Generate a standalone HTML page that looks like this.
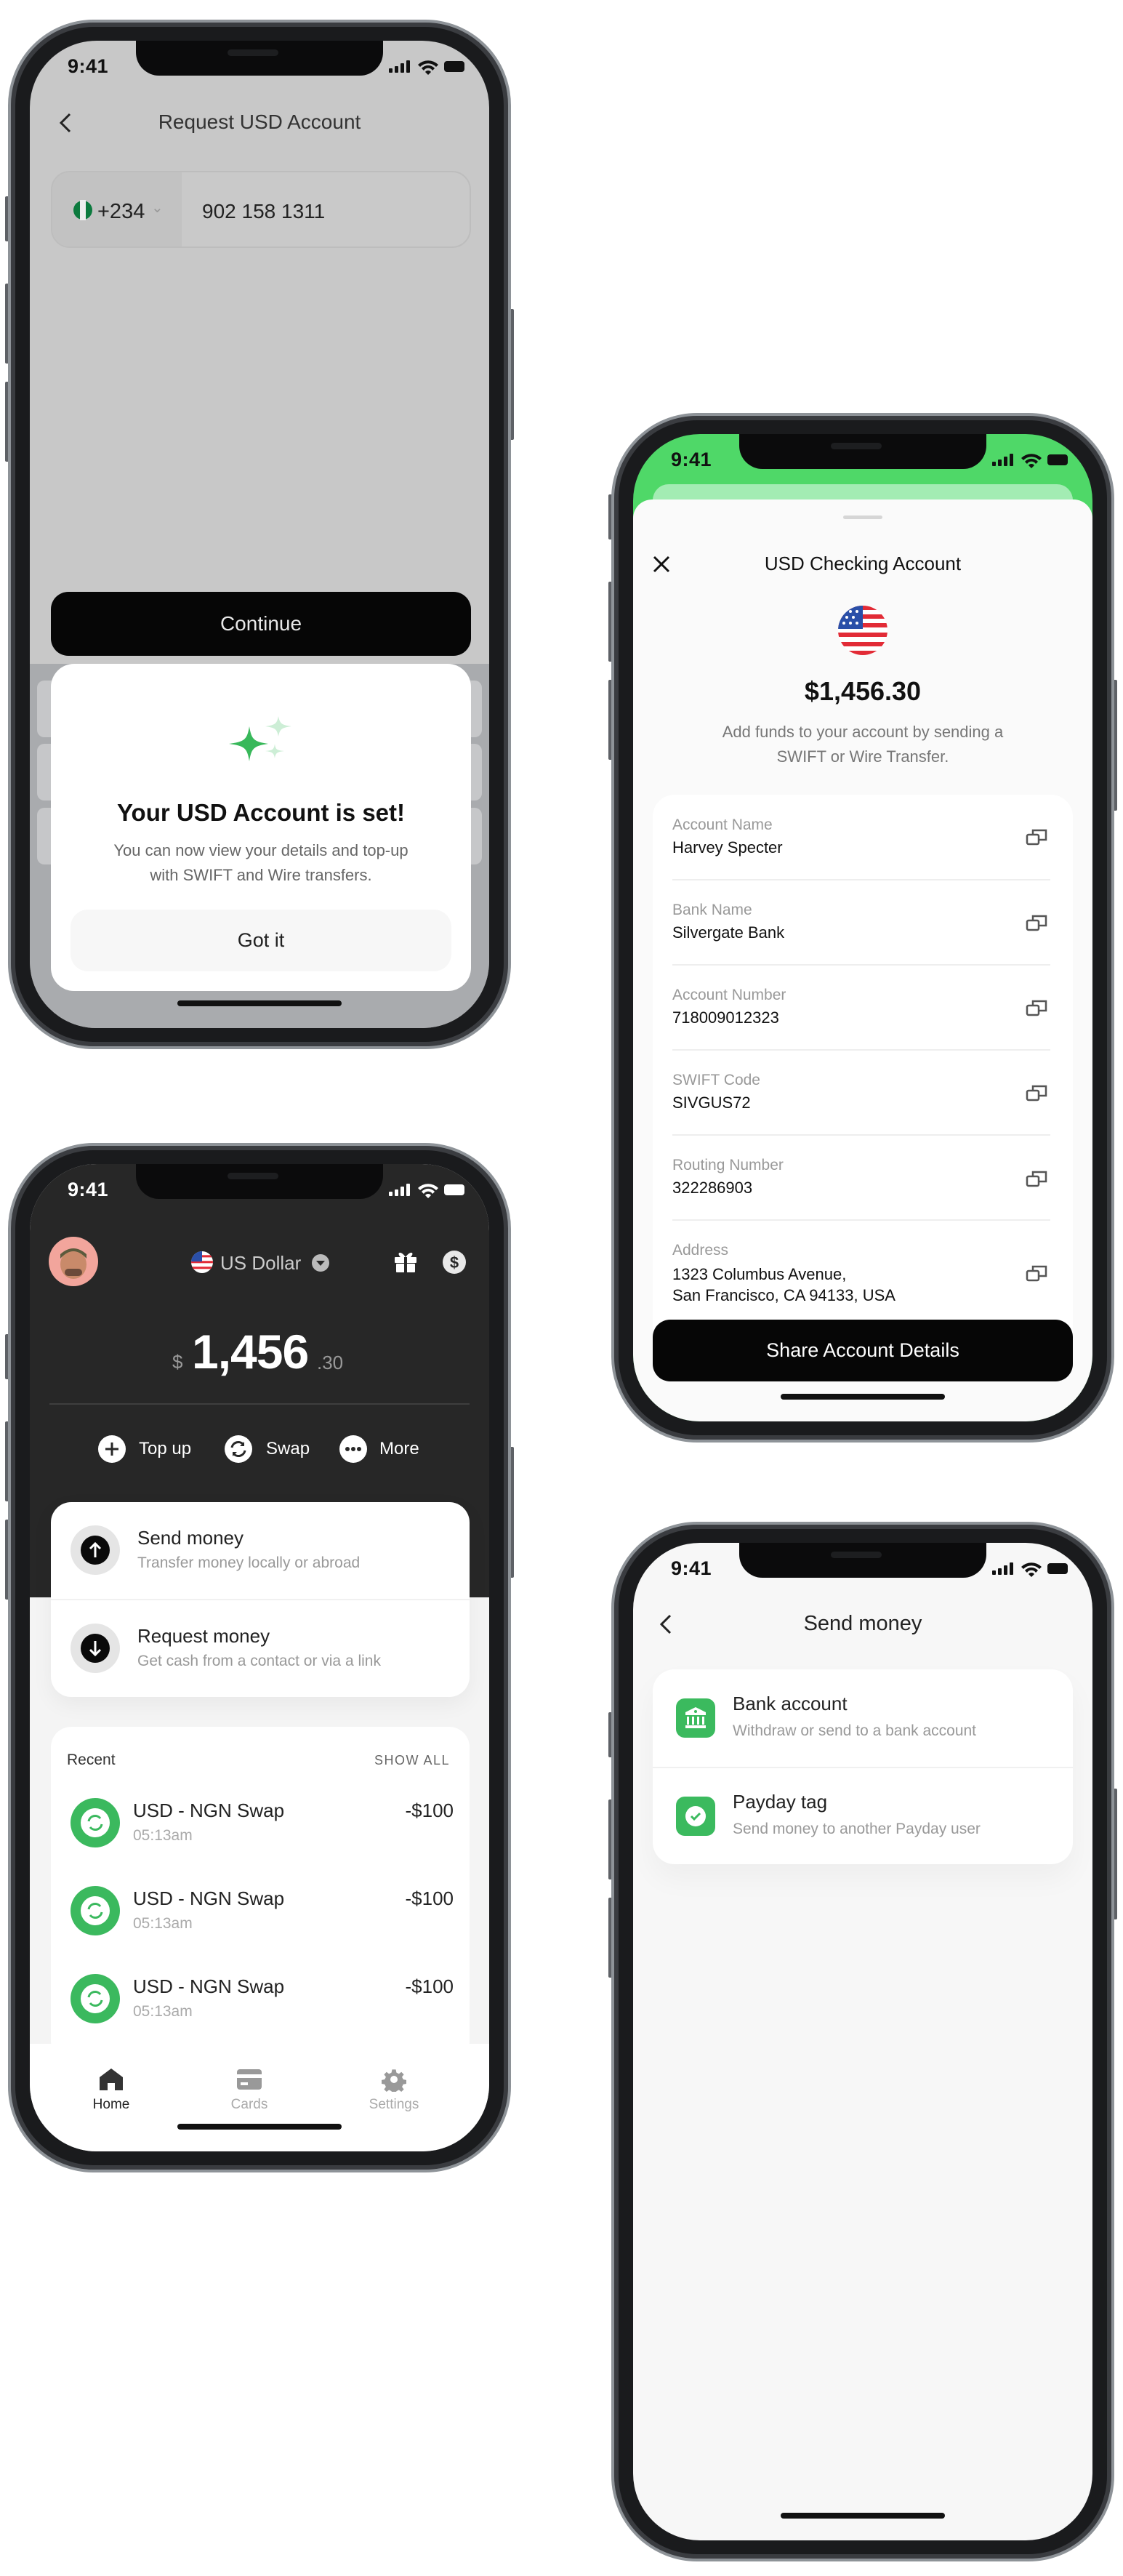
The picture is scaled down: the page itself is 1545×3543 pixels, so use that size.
<!DOCTYPE html>
<html><head><meta charset="utf-8">
<style>
*{box-sizing:border-box;margin:0;padding:0}
body{width:1545px;height:3543px;background:#fff;position:relative;overflow:hidden;font-family:"Liberation Sans",Arial,sans-serif}
.phone{position:absolute;width:692px;height:1416px;border-radius:118px;background:#1a1b1d;border:4px solid #8e9398;box-shadow:inset 0 0 0 6px #3a3c40}
.btn{position:absolute;background:#5e6166;width:6px;border-radius:2px}
.screen{position:absolute;left:26px;top:25px;width:632px;height:1358px;border-radius:92px;overflow:hidden}
.notch{position:absolute;left:146px;top:0;width:340px;height:48px;background:#0b0b0c;border-radius:0 0 32px 32px;z-index:5}
.notch:after{content:"";position:absolute;left:126px;top:12px;width:70px;height:9px;border-radius:5px;background:#1d1e20}
.time{position:absolute;left:52px;top:20px;font-size:27px;font-weight:700;z-index:6;letter-spacing:.5px}
.stat{position:absolute;left:494px;top:24px;z-index:6}
.abs{position:absolute}
.ind{position:absolute;left:203px;width:226px;height:8px;border-radius:4px;background:#111;bottom:30px}
.c{text-align:center}
.row{height:117px;border-bottom:2px solid #eee;position:relative;padding-top:29px}
</style></head><body>

<!-- PHONE 1 -->
<div class="btn" style="left:7px;top:270px;height:62px"></div>
<div class="btn" style="left:7px;top:390px;height:110px"></div>
<div class="btn" style="left:7px;top:525px;height:110px"></div>
<div class="btn" style="left:701px;top:425px;height:180px"></div>
<div class="phone" style="left:11px;top:27px">
 <div class="screen" style="background:#c8c8c8">
  <div class="notch"></div>
  <div class="time" style="color:#111">9:41</div>
  <svg class="stat" width="110" height="24" viewBox="0 0 110 24"><g fill="#111"><rect x="0" y="14" width="5" height="6" rx="1"/><rect x="8" y="11" width="5" height="9" rx="1"/><rect x="16" y="7" width="5" height="13" rx="1"/><rect x="24" y="3" width="5" height="17" rx="1"/><path d="M40 9a20 20 0 0 1 28 0l-3 3a15 15 0 0 0-22 0z M45 14a12 12 0 0 1 18 0l-3 3a7 7 0 0 0-12 0z M50 19a5 5 0 0 1 8 0l-4 4z"/><rect x="76" y="4" width="28" height="15" rx="4"/></g></svg>
  <svg class="abs" style="left:38px;top:98px" width="22" height="30" viewBox="0 0 22 30"><path d="M17 3L5 15l12 12" stroke="#222" stroke-width="3" fill="none"/></svg>
  <div class="abs c" style="left:0;width:632px;top:96px;font-size:28px;color:#333">Request USD Account</div>
  <div class="abs" style="left:29px;top:179px;width:578px;height:106px;border:2px solid #bdbdbd;border-radius:26px;overflow:hidden;background:#c9c9c9">
   <div class="abs" style="left:0;top:0;width:178px;height:106px;background:#c2c2c2"></div>
   <svg class="abs" style="left:28px;top:38px" width="28" height="28"><circle cx="14" cy="14" r="13" fill="#0c7a3e"/><rect x="10" y="0" width="8" height="28" fill="#eee"/></svg>
   <div class="abs" style="left:62px;top:38px;font-size:29px;color:#222">+234</div>
   <div class="abs" style="left:136px;top:36px;font-size:20px;color:#999">⌄</div>
   <div class="abs" style="left:206px;top:38px;font-size:28px;color:#222">902 158 1311</div>
  </div>
  <div class="abs" style="left:29px;top:758px;width:578px;height:88px;background:#060606;border-radius:24px;color:#e8e8e8;font-size:28px;line-height:88px"><div class="c">Continue</div></div>
  <div class="abs" style="left:0;top:857px;width:632px;height:510px;background:#a9abae"></div>
  <div class="abs" style="left:10px;top:880px;width:612px;height:78px;background:#c6c7c9;border-radius:10px"></div>
  <div class="abs" style="left:10px;top:967px;width:612px;height:78px;background:#c6c7c9;border-radius:10px"></div>
  <div class="abs" style="left:10px;top:1055px;width:612px;height:78px;background:#c6c7c9;border-radius:10px"></div>
  <div class="abs" style="left:29px;top:857px;width:578px;height:450px;background:#fff;border-radius:32px">
   <svg class="abs" style="left:243px;top:68px" width="100" height="90" viewBox="0 0 100 90"><path d="M30 18 C33 36 36 39 56 42 C36 45 33 48 30 66 C27 48 24 45 2 42 C24 39 27 36 30 18Z" fill="#38b85a"/><path d="M70 4 C72 14 74 16 88 18 C74 20 72 22 70 32 C68 22 66 20 52 18 C66 16 68 14 70 4Z" fill="#cdeed6"/><path d="M65 42 C66 50 68 51 78 52 C68 53 66 55 65 62 C64 55 62 53 52 52 C62 51 64 50 65 42Z" fill="#cdeed6"/></svg>
   <div class="abs c" style="left:0;width:578px;top:186px;font-size:33px;font-weight:700;color:#111">Your USD Account is set!</div>
   <div class="abs c" style="left:0;width:578px;top:240px;font-size:22px;line-height:34px;color:#666">You can now view your details and top-up<br>with SWIFT and Wire transfers.</div>
   <div class="abs c" style="left:27px;top:338px;width:524px;height:85px;background:#f7f7f7;border-radius:24px;font-size:27px;line-height:85px;color:#222">Got it</div>
  </div>
  <div class="ind" style="background:#111"></div>
 </div>
</div>

<!-- PHONE 2 -->
<div class="btn" style="left:837px;top:680px;height:62px"></div>
<div class="btn" style="left:837px;top:800px;height:110px"></div>
<div class="btn" style="left:837px;top:935px;height:110px"></div>
<div class="btn" style="left:1531px;top:935px;height:180px"></div>
<div class="phone" style="left:841px;top:568px">
 <div class="screen" style="background:#4fd868">
  <div class="notch"></div>
  <div class="time" style="color:#111">9:41</div>
  <svg class="stat" width="110" height="24" viewBox="0 0 110 24"><g fill="#111"><rect x="0" y="14" width="5" height="6" rx="1"/><rect x="8" y="11" width="5" height="9" rx="1"/><rect x="16" y="7" width="5" height="13" rx="1"/><rect x="24" y="3" width="5" height="17" rx="1"/><path d="M40 9a20 20 0 0 1 28 0l-3 3a15 15 0 0 0-22 0z M45 14a12 12 0 0 1 18 0l-3 3a7 7 0 0 0-12 0z M50 19a5 5 0 0 1 8 0l-4 4z"/><rect x="76" y="4" width="28" height="15" rx="4"/></g></svg>
  <div class="abs" style="left:27px;top:69px;width:578px;height:40px;background:#a3ecb3;border-radius:22px 22px 0 0"></div>
  <div class="abs" style="left:0;top:90px;width:632px;height:1300px;background:#fafafa;border-radius:26px 26px 0 0"></div>
  <div class="abs" style="left:289px;top:112px;width:54px;height:5px;border-radius:3px;background:#d6d6d6"></div>
  <svg class="abs" style="left:26px;top:166px" width="26" height="26"><path d="M3 3L23 23M23 3L3 23" stroke="#111" stroke-width="3"/></svg>
  <div class="abs c" style="left:0;width:632px;top:163px;font-size:26px;color:#111;font-weight:500">USD Checking Account</div>
  <svg class="abs" style="left:282px;top:236px" width="68" height="68" viewBox="0 0 68 68"><defs><clipPath id="cf"><circle cx="34" cy="34" r="34"/></clipPath></defs><g clip-path="url(#cf)"><rect width="68" height="68" fill="#fff"/><rect y="0" width="68" height="6" fill="#e22b36"/><rect y="12" width="68" height="6" fill="#e22b36"/><rect y="24" width="68" height="6" fill="#e22b36"/><rect y="37" width="68" height="6" fill="#e22b36"/><rect y="50" width="68" height="6" fill="#e22b36"/><rect y="62" width="68" height="6" fill="#e22b36"/><rect width="34" height="32" fill="#2a4fa8"/><g fill="#fff"><circle cx="8" cy="8" r="2"/><circle cx="17" cy="8" r="2"/><circle cx="26" cy="8" r="2"/><circle cx="12" cy="16" r="2"/><circle cx="21" cy="16" r="2"/><circle cx="8" cy="24" r="2"/><circle cx="17" cy="24" r="2"/><circle cx="26" cy="24" r="2"/></g></g></svg>
  <div class="abs c" style="left:0;width:632px;top:333px;font-size:36px;font-weight:700;color:#111">$1,456.30</div>
  <div class="abs c" style="left:0;width:632px;top:393px;font-size:22px;line-height:34px;color:#777">Add funds to your account by sending a<br>SWIFT or Wire Transfer.</div>
  <div class="abs" style="left:27px;top:496px;width:578px;height:760px;background:#fff;border-radius:30px"></div>
  <div class="abs" style="left:54px;top:526px;width:520px">
   <div class="row" style="height:88px;padding-top:0"><div style="font-size:21px;color:#999">Account Name</div><div style="font-size:22px;color:#111;margin-top:6px">Harvey Specter</div></div>
   <div class="row"><div style="font-size:21px;color:#999">Bank Name</div><div style="font-size:22px;color:#111;margin-top:6px">Silvergate Bank</div></div>
   <div class="row"><div style="font-size:21px;color:#999">Account Number</div><div style="font-size:22px;color:#111;margin-top:6px">718009012323</div></div>
   <div class="row"><div style="font-size:21px;color:#999">SWIFT Code</div><div style="font-size:22px;color:#111;margin-top:6px">SIVGUS72</div></div>
   <div class="row"><div style="font-size:21px;color:#999">Routing Number</div><div style="font-size:22px;color:#111;margin-top:6px">322286903</div></div>
   <div style="padding-top:29px"><div style="font-size:21px;color:#999">Address</div><div style="font-size:22px;color:#111;margin-top:6px;line-height:29px">1323 Columbus Avenue,<br>San Francisco, CA 94133, USA</div></div>
  </div>
  <svg class="abs" style="left:540px;top:540px" width="30" height="30"><g fill="none" stroke="#555" stroke-width="2.5"><rect x="2" y="11" width="16" height="13" rx="2"/><path d="M10 11V5h18v13h-10"/></g></svg>
  <svg class="abs" style="left:540px;top:658px" width="30" height="30"><g fill="none" stroke="#555" stroke-width="2.5"><rect x="2" y="11" width="16" height="13" rx="2"/><path d="M10 11V5h18v13h-10"/></g></svg>
  <svg class="abs" style="left:540px;top:775px" width="30" height="30"><g fill="none" stroke="#555" stroke-width="2.5"><rect x="2" y="11" width="16" height="13" rx="2"/><path d="M10 11V5h18v13h-10"/></g></svg>
  <svg class="abs" style="left:540px;top:892px" width="30" height="30"><g fill="none" stroke="#555" stroke-width="2.5"><rect x="2" y="11" width="16" height="13" rx="2"/><path d="M10 11V5h18v13h-10"/></g></svg>
  <svg class="abs" style="left:540px;top:1010px" width="30" height="30"><g fill="none" stroke="#555" stroke-width="2.5"><rect x="2" y="11" width="16" height="13" rx="2"/><path d="M10 11V5h18v13h-10"/></g></svg>
  <svg class="abs" style="left:540px;top:1140px" width="30" height="30"><g fill="none" stroke="#555" stroke-width="2.5"><rect x="2" y="11" width="16" height="13" rx="2"/><path d="M10 11V5h18v13h-10"/></g></svg>
  <div class="abs c" style="left:27px;top:1218px;width:578px;height:85px;background:#060606;border-radius:24px;color:#fff;font-size:27px;line-height:85px">Share Account Details</div>
  <div class="ind"></div>
 </div>
</div>

<!-- PHONE 3 -->
<div class="btn" style="left:7px;top:1835px;height:62px"></div>
<div class="btn" style="left:7px;top:1955px;height:110px"></div>
<div class="btn" style="left:7px;top:2090px;height:110px"></div>
<div class="btn" style="left:701px;top:1990px;height:180px"></div>
<div class="phone" style="left:11px;top:1572px">
 <div class="screen" style="background:#f4f4f4">
  <div class="abs" style="left:0;top:0;width:632px;height:596px;background:#272727"></div>
  <div class="notch"></div>
  <div class="time" style="color:#fff">9:41</div>
  <svg class="stat" width="110" height="24" viewBox="0 0 110 24"><g fill="#fff"><rect x="0" y="14" width="5" height="6" rx="1"/><rect x="8" y="11" width="5" height="9" rx="1"/><rect x="16" y="7" width="5" height="13" rx="1"/><rect x="24" y="3" width="5" height="17" rx="1"/><path d="M40 9a20 20 0 0 1 28 0l-3 3a15 15 0 0 0-22 0z M45 14a12 12 0 0 1 18 0l-3 3a7 7 0 0 0-12 0z M50 19a5 5 0 0 1 8 0l-4 4z"/><rect x="76" y="4" width="28" height="15" rx="4"/></g></svg>
  <svg class="abs" style="left:26px;top:100px" width="68" height="68"><circle cx="34" cy="34" r="34" fill="#f2a59c"/><ellipse cx="34" cy="38" rx="18" ry="20" fill="#c98a6a"/><path d="M16 30 Q34 10 52 30 L52 24 Q34 8 16 24Z" fill="#5b5a3c"/><rect x="22" y="44" width="24" height="10" rx="5" fill="#6b4a3a"/></svg>
  <svg class="abs" style="left:222px;top:120px" width="30" height="30" viewBox="0 0 68 68"><defs><clipPath id="cf2"><circle cx="34" cy="34" r="34"/></clipPath></defs><g clip-path="url(#cf2)"><rect width="68" height="68" fill="#fff"/><rect y="12" width="68" height="7" fill="#e22b36"/><rect y="30" width="68" height="7" fill="#e22b36"/><rect y="48" width="68" height="7" fill="#e22b36"/><rect width="34" height="32" fill="#2a4fa8"/></g></svg>
  <div class="abs" style="left:262px;top:121px;font-size:26px;color:#ccc">US Dollar</div>
  <svg class="abs" style="left:388px;top:124px" width="24" height="24"><circle cx="12" cy="12" r="12" fill="#bbb"/><path d="M6 9h12l-6 7z" fill="#272727"/></svg>
  <svg class="abs" style="left:500px;top:118px" width="34" height="32"><g fill="#fff"><rect x="2" y="10" width="30" height="8" rx="1"/><rect x="4" y="19" width="26" height="12" rx="1"/><path d="M17 10 C10 0 4 4 10 10Z M17 10 C24 0 30 4 24 10Z"/></g><rect x="15" y="10" width="4" height="22" fill="#272727"/></svg>
  <svg class="abs" style="left:567px;top:118px" width="34" height="34"><circle cx="17" cy="17" r="16" fill="#e8e8e8"/><text x="17" y="25" text-anchor="middle" font-family="Liberation Sans" font-weight="bold" font-size="22" fill="#272727">$</text></svg>
  <div class="abs" style="left:196px;top:257px;font-size:26px;color:#999">$</div>
  <div class="abs" style="left:223px;top:220px;font-size:66px;font-weight:700;color:#fff;letter-spacing:-1px">1,456</div>
  <div class="abs" style="left:395px;top:258px;font-size:26px;color:#999">.30</div>
  <div class="abs" style="left:27px;top:329px;width:578px;height:2px;background:#3e3e3e"></div>
  <svg class="abs" style="left:93px;top:372px" width="40" height="40"><circle cx="20" cy="20" r="19" fill="#fff"/><path d="M20 11v18M11 20h18" stroke="#272727" stroke-width="3"/></svg>
  <div class="abs" style="left:150px;top:378px;font-size:24px;color:#fff">Top up</div>
  <svg class="abs" style="left:267px;top:372px" width="40" height="40"><circle cx="20" cy="20" r="19" fill="#fff"/><path d="M11 18a9 9 0 0 1 16-4M29 22a9 9 0 0 1-16 4" stroke="#272727" stroke-width="3" fill="none"/><path d="M28 10v6h-6z M12 30v-6h6z" fill="#272727"/></svg>
  <div class="abs" style="left:325px;top:378px;font-size:24px;color:#fff">Swap</div>
  <svg class="abs" style="left:425px;top:372px" width="40" height="40"><circle cx="20" cy="20" r="19" fill="#fff"/><circle cx="12" cy="20" r="3" fill="#272727"/><circle cx="20" cy="20" r="3" fill="#272727"/><circle cx="28" cy="20" r="3" fill="#272727"/></svg>
  <div class="abs" style="left:481px;top:378px;font-size:24px;color:#fff">More</div>
  <div class="abs" style="left:29px;top:465px;width:576px;height:268px;background:#fff;border-radius:28px;box-shadow:0 10px 30px rgba(0,0,0,.05)">
   <div class="abs" style="left:0;top:133px;width:576px;height:2px;background:#f1f1f1"></div>
   <svg class="abs" style="left:27px;top:32px" width="68" height="68"><circle cx="34" cy="34" r="34" fill="#e5e5e5"/><circle cx="34" cy="34" r="20" fill="#0a0a0a"/><path d="M34 44V26M27 32l7-7 7 7" stroke="#fff" stroke-width="3" fill="none"/></svg>
   <div class="abs" style="left:119px;top:34px;font-size:26px;color:#222">Send money</div>
   <div class="abs" style="left:119px;top:72px;font-size:21px;color:#999">Transfer money locally or abroad</div>
   <svg class="abs" style="left:27px;top:167px" width="68" height="68"><circle cx="34" cy="34" r="34" fill="#e5e5e5"/><circle cx="34" cy="34" r="20" fill="#0a0a0a"/><path d="M34 24V42M27 36l7 7 7-7" stroke="#fff" stroke-width="3" fill="none"/></svg>
   <div class="abs" style="left:119px;top:169px;font-size:26px;color:#222">Request money</div>
   <div class="abs" style="left:119px;top:207px;font-size:21px;color:#999">Get cash from a contact or via a link</div>
  </div>
  <div class="abs" style="left:29px;top:774px;width:576px;height:460px;background:#fff;border-radius:28px">
   <div class="abs" style="left:22px;top:34px;font-size:21px;color:#333">Recent</div>
   <div class="abs" style="right:27px;top:36px;font-size:18px;color:#666;letter-spacing:1.5px">SHOW ALL</div>
   <div class="abs" style="left:0;top:98px;width:576px">
    <div style="position:relative;height:121px">
     <svg class="abs" style="left:27px;top:0" width="68" height="68"><circle cx="34" cy="34" r="34" fill="#3bb95e"/><circle cx="34" cy="34" r="20" fill="#fff"/><path d="M25 32a9 9 0 0 1 16-4M43 36a9 9 0 0 1-16 4" stroke="#3bb95e" stroke-width="3" fill="none"/></svg>
     <div class="abs" style="left:113px;top:2px;font-size:26px;color:#222">USD - NGN Swap</div>
     <div class="abs" style="left:113px;top:40px;font-size:21px;color:#aaa">05:13am</div>
     <div class="abs" style="right:22px;top:2px;font-size:26px;color:#222">-$100</div>
    </div>
    <div style="position:relative;height:121px">
     <svg class="abs" style="left:27px;top:0" width="68" height="68"><circle cx="34" cy="34" r="34" fill="#3bb95e"/><circle cx="34" cy="34" r="20" fill="#fff"/><path d="M25 32a9 9 0 0 1 16-4M43 36a9 9 0 0 1-16 4" stroke="#3bb95e" stroke-width="3" fill="none"/></svg>
     <div class="abs" style="left:113px;top:2px;font-size:26px;color:#222">USD - NGN Swap</div>
     <div class="abs" style="left:113px;top:40px;font-size:21px;color:#aaa">05:13am</div>
     <div class="abs" style="right:22px;top:2px;font-size:26px;color:#222">-$100</div>
    </div>
    <div style="position:relative;height:121px">
     <svg class="abs" style="left:27px;top:0" width="68" height="68"><circle cx="34" cy="34" r="34" fill="#3bb95e"/><circle cx="34" cy="34" r="20" fill="#fff"/><path d="M25 32a9 9 0 0 1 16-4M43 36a9 9 0 0 1-16 4" stroke="#3bb95e" stroke-width="3" fill="none"/></svg>
     <div class="abs" style="left:113px;top:2px;font-size:26px;color:#222">USD - NGN Swap</div>
     <div class="abs" style="left:113px;top:40px;font-size:21px;color:#aaa">05:13am</div>
     <div class="abs" style="right:22px;top:2px;font-size:26px;color:#222">-$100</div>
    </div>
   </div>
  </div>
  <div class="abs" style="left:0;top:1210px;width:632px;height:150px;background:#fff"></div>
  <svg class="abs" style="left:94px;top:1242px" width="36" height="34"><path d="M18 2L2 14v18h32V14z" fill="#333"/><rect x="13" y="22" width="10" height="10" fill="#fff"/></svg>
  <div class="abs c" style="left:62px;width:100px;top:1283px;font-size:19px;color:#222">Home</div>
  <svg class="abs" style="left:284px;top:1244px" width="36" height="30"><rect x="1" y="1" width="34" height="28" rx="4" fill="#999"/><rect x="1" y="8" width="34" height="5" fill="#fff"/><rect x="6" y="19" width="10" height="4" fill="#fff"/></svg>
  <div class="abs c" style="left:252px;width:100px;top:1283px;font-size:19px;color:#aaa">Cards</div>
  <svg class="abs" style="left:484px;top:1242px" width="34" height="34" viewBox="0 0 34 34"><path d="M14 1h6l1 5 4 2 4-3 4 4-3 4 2 4 5 1v6l-5 1-2 4 3 4-4 4-4-3-4 2-1 5h-6l-1-5-4-2-4 3-4-4 3-4-2-4-5-1v-6l5-1 2-4-3-4 4-4 4 3 4-2z" fill="#999" transform="scale(.85) translate(3 3)"/><circle cx="17" cy="17" r="5" fill="#fff"/></svg>
  <div class="abs c" style="left:451px;width:100px;top:1283px;font-size:19px;color:#aaa">Settings</div>
  <div class="ind"></div>
 </div>
</div>

<!-- PHONE 4 -->
<div class="btn" style="left:837px;top:2355px;height:62px"></div>
<div class="btn" style="left:837px;top:2475px;height:110px"></div>
<div class="btn" style="left:837px;top:2610px;height:110px"></div>
<div class="btn" style="left:1531px;top:2460px;height:180px"></div>
<div class="phone" style="left:841px;top:2093px;height:1430px">
 <div class="screen" style="background:#f7f7f7;height:1372px">
  <div class="notch"></div>
  <div class="time" style="color:#111">9:41</div>
  <svg class="stat" width="110" height="24" viewBox="0 0 110 24"><g fill="#111"><rect x="0" y="14" width="5" height="6" rx="1"/><rect x="8" y="11" width="5" height="9" rx="1"/><rect x="16" y="7" width="5" height="13" rx="1"/><rect x="24" y="3" width="5" height="17" rx="1"/><path d="M40 9a20 20 0 0 1 28 0l-3 3a15 15 0 0 0-22 0z M45 14a12 12 0 0 1 18 0l-3 3a7 7 0 0 0-12 0z M50 19a5 5 0 0 1 8 0l-4 4z"/><rect x="76" y="4" width="28" height="15" rx="4"/></g></svg>
  <svg class="abs" style="left:34px;top:97px" width="22" height="30" viewBox="0 0 22 30"><path d="M17 3L5 15l12 12" stroke="#222" stroke-width="3" fill="none"/></svg>
  <div class="abs c" style="left:0;width:632px;top:95px;font-size:29px;color:#222">Send money</div>
  <div class="abs" style="left:27px;top:174px;width:578px;height:268px;background:#fff;border-radius:30px;box-shadow:0 20px 40px rgba(0,0,0,.04)">
   <div class="abs" style="left:0;top:134px;width:578px;height:2px;background:#f0f0f0"></div>
   <svg class="abs" style="left:32px;top:40px" width="54" height="54"><rect width="54" height="54" rx="12" fill="#3bba5e"/><g fill="#fff"><path d="M27 12L13 19v4h28v-4z"/><rect x="15" y="25" width="3" height="11"/><rect x="22" y="25" width="3" height="11"/><rect x="29" y="25" width="3" height="11"/><rect x="36" y="25" width="3" height="11"/><rect x="13" y="37" width="28" height="4"/></g><circle cx="27" cy="18" r="2" fill="#3bba5e"/></svg>
   <div class="abs" style="left:110px;top:32px;font-size:26px;color:#222">Bank account</div>
   <div class="abs" style="left:110px;top:73px;font-size:21px;color:#999">Withdraw or send to a bank account</div>
   <svg class="abs" style="left:32px;top:175px" width="54" height="54"><rect width="54" height="54" rx="12" fill="#3bba5e"/><circle cx="27" cy="27" r="14" fill="#fff"/><path d="M21 27l4 4 8-8" stroke="#3bba5e" stroke-width="3" fill="none"/></svg>
   <div class="abs" style="left:110px;top:167px;font-size:26px;color:#222">Payday tag</div>
   <div class="abs" style="left:110px;top:208px;font-size:21px;color:#999">Send money to another Payday user</div>
  </div>
  <div class="ind"></div>
 </div>
</div>
</body></html>
